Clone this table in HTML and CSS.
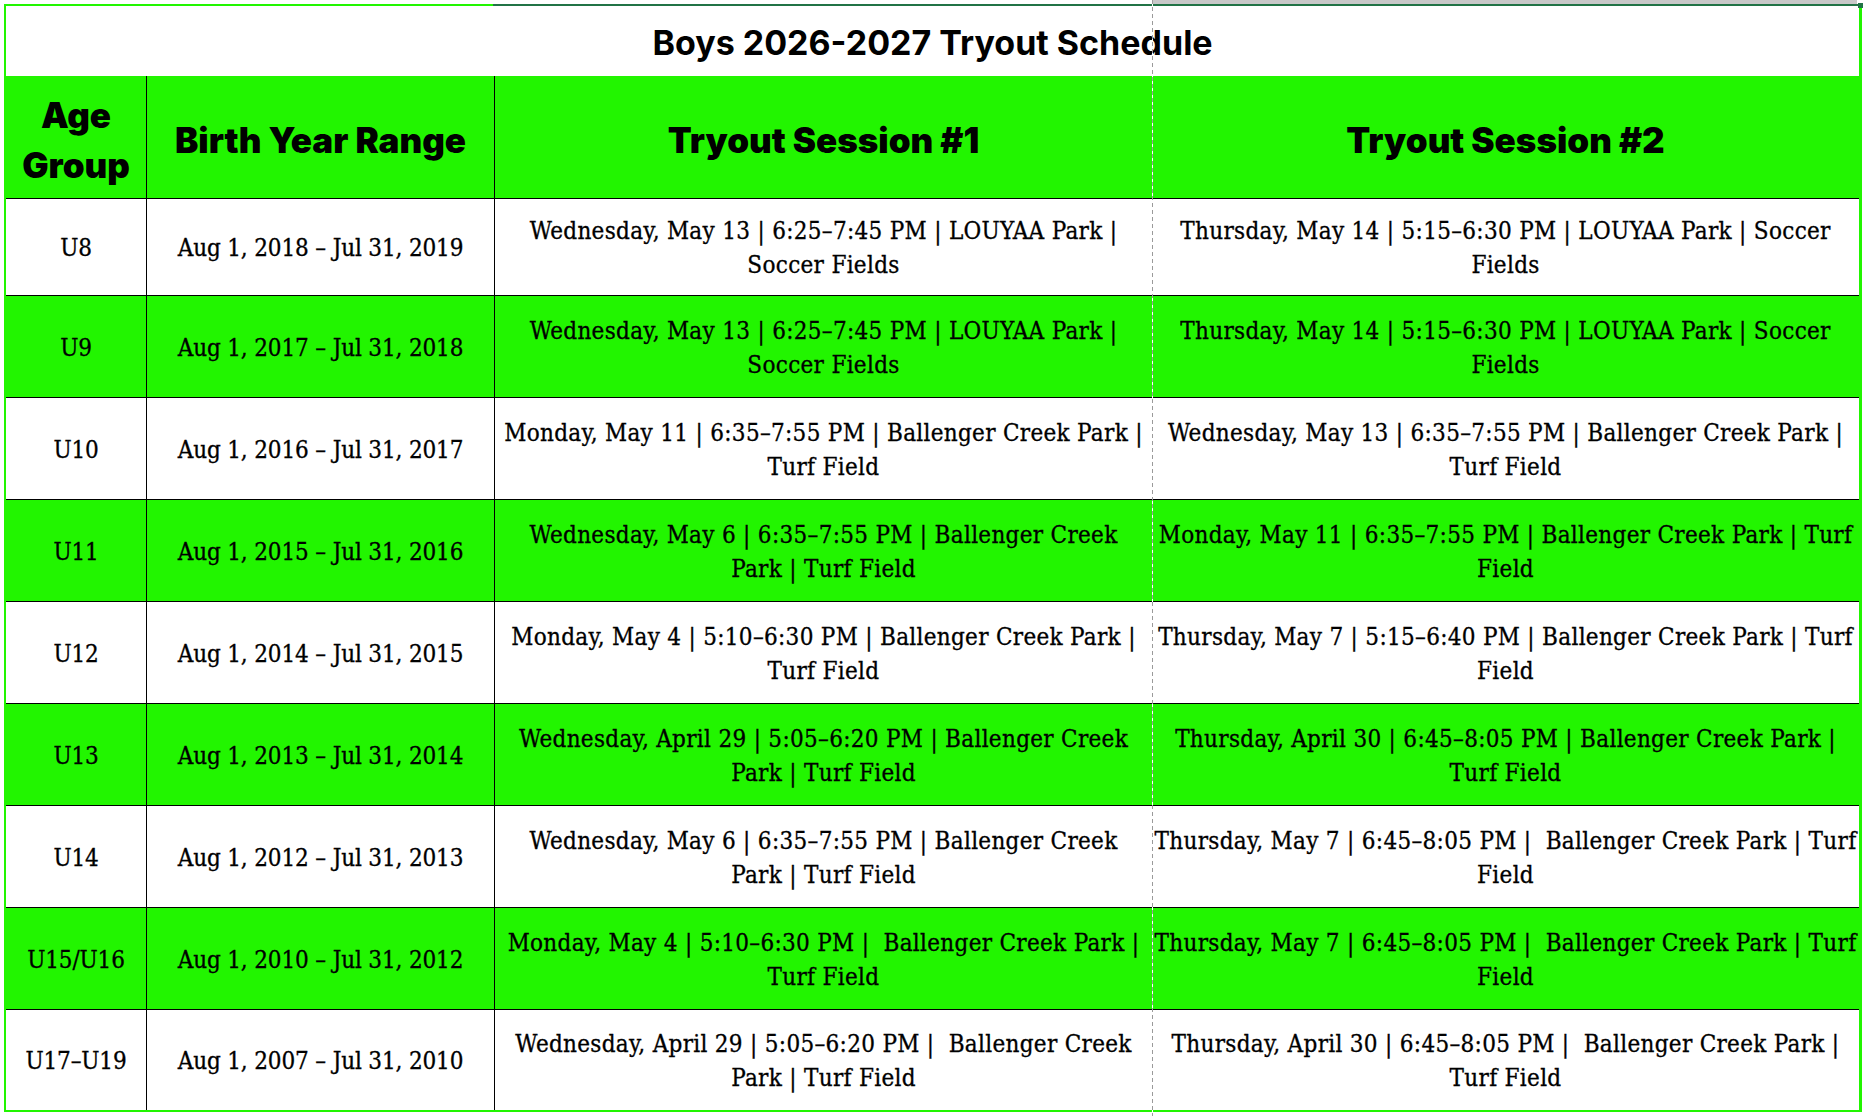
FILE: index.html
```html
<!DOCTYPE html>
<html lang="en">
<head>
<meta charset="utf-8">
<title>Boys 2026-2027 Tryout Schedule</title>
<link rel="stylesheet" href="styles.css">
</head>
<body>
<div class="sheet">
  <div class="top-strip">
    <div class="strip-space"></div>
    <div class="strip-gray"></div>
  </div>
  <div class="top-line">
    <div class="tl-light"></div>
    <div class="tl-dark"></div>
    <div class="tl-handle"></div>
  </div>
  <table class="schedule">
    <colgroup>
      <col class="c-age">
      <col class="c-birth">
      <col class="c-s1">
      <col class="c-s2">
    </colgroup>
    <tr class="title-row">
      <td colspan="4" class="title">Boys 2026-2027 Tryout Schedule</td>
    </tr>
    <tr class="head-row">
      <th>Age<br>Group</th>
      <th>Birth Year Range</th>
      <th class="no-right">Tryout Session #1</th>
      <th class="last">Tryout Session #2</th>
    </tr>
    <tr class="row first white">
      <td class="short">U8</td>
      <td class="short">Aug 1, 2018 – Jul 31, 2019</td>
      <td class="no-right">Wednesday, May 13 | 6:25–7:45 PM | LOUYAA Park |<br>Soccer Fields</td>
      <td class="last">Thursday, May 14 | 5:15–6:30 PM | LOUYAA Park | Soccer<br>Fields</td>
    </tr>
    <tr class="row green">
      <td class="short">U9</td>
      <td class="short">Aug 1, 2017 – Jul 31, 2018</td>
      <td class="no-right">Wednesday, May 13 | 6:25–7:45 PM | LOUYAA Park |<br>Soccer Fields</td>
      <td class="last">Thursday, May 14 | 5:15–6:30 PM | LOUYAA Park | Soccer<br>Fields</td>
    </tr>
    <tr class="row white">
      <td class="short">U10</td>
      <td class="short">Aug 1, 2016 – Jul 31, 2017</td>
      <td class="no-right">Monday, May 11 | 6:35–7:55 PM | Ballenger Creek Park |<br>Turf Field</td>
      <td class="last">Wednesday, May 13 | 6:35–7:55 PM | Ballenger Creek Park |<br>Turf Field</td>
    </tr>
    <tr class="row green">
      <td class="short">U11</td>
      <td class="short">Aug 1, 2015 – Jul 31, 2016</td>
      <td class="no-right">Wednesday, May 6 | 6:35–7:55 PM | Ballenger Creek<br>Park | Turf Field</td>
      <td class="last">Monday, May 11 | 6:35–7:55 PM | Ballenger Creek Park | Turf<br>Field</td>
    </tr>
    <tr class="row white">
      <td class="short">U12</td>
      <td class="short">Aug 1, 2014 – Jul 31, 2015</td>
      <td class="no-right">Monday, May 4 | 5:10–6:30 PM | Ballenger Creek Park |<br>Turf Field</td>
      <td class="last">Thursday, May 7 | 5:15–6:40 PM | Ballenger Creek Park | Turf<br>Field</td>
    </tr>
    <tr class="row green">
      <td class="short">U13</td>
      <td class="short">Aug 1, 2013 – Jul 31, 2014</td>
      <td class="no-right">Wednesday, April 29 | 5:05–6:20 PM | Ballenger Creek<br>Park | Turf Field</td>
      <td class="last">Thursday, April 30 | 6:45–8:05 PM | Ballenger Creek Park |<br>Turf Field</td>
    </tr>
    <tr class="row white">
      <td class="short">U14</td>
      <td class="short">Aug 1, 2012 – Jul 31, 2013</td>
      <td class="no-right">Wednesday, May 6 | 6:35–7:55 PM | Ballenger Creek<br>Park | Turf Field</td>
      <td class="last">Thursday, May 7 | 6:45–8:05 PM | &nbsp;Ballenger Creek Park | Turf<br>Field</td>
    </tr>
    <tr class="row green">
      <td class="short">U15/U16</td>
      <td class="short">Aug 1, 2010 – Jul 31, 2012</td>
      <td class="no-right">Monday, May 4 | 5:10–6:30 PM | &nbsp;Ballenger Creek Park |<br>Turf Field</td>
      <td class="last">Thursday, May 7 | 6:45–8:05 PM | &nbsp;Ballenger Creek Park | Turf<br>Field</td>
    </tr>
    <tr class="row bottom white">
      <td class="short">U17–U19</td>
      <td class="short">Aug 1, 2007 – Jul 31, 2010</td>
      <td class="no-right">Wednesday, April 29 | 5:05–6:20 PM | &nbsp;Ballenger Creek<br>Park | Turf Field</td>
      <td class="last">Thursday, April 30 | 6:45–8:05 PM | &nbsp;Ballenger Creek Park |<br>Turf Field</td>
    </tr>
  </table>
  <div class="page-break"></div>
</div>
</body>
</html>
```
FILE: styles.css
```css
html, body {
  margin: 0;
  padding: 0;
  background: #ffffff;
}

.sheet {
  position: relative;
  width: 1865px;
  height: 1116px;
  overflow: hidden;
  background: #ffffff;
}

.top-strip {
  display: flex;
  height: 4px;
}

.strip-space {
  width: 1152px;
}

.strip-gray {
  width: 705px;
  background: #c8c8c8;
}

.top-line {
  position: relative;
  display: flex;
  height: 2px;
  margin-left: 4px;
  width: 1856px;
}

.tl-light {
  width: 489px;
  background: #22f500;
}

.tl-dark {
  flex: 1;
  background: #217346;
}

.tl-handle {
  position: absolute;
  right: -3px;
  top: -1px;
  width: 5px;
  height: 5px;
  background: #217346;
}

.schedule {
  margin-left: 4px;
  width: 1858px;
  table-layout: fixed;
  border-collapse: separate;
  border-spacing: 0;
  border-left: 2px solid #22f500;
  border-right: 3px solid #22f500;
  border-bottom: 2px solid #22f500;
  font-family: "DejaVu Serif Condensed", "DejaVu Serif", serif;
  font-stretch: condensed;
  color: #000000;
}

.c-age { width: 141px; }
.c-birth { width: 348px; }
.c-s1 { width: 657px; }
.c-s2 { width: 707px; }

.title-row {
  height: 70px;
}

.title {
  padding: 3px 0 0 0;
  text-align: center;
  vertical-align: middle;
  font-family: Inter, "Liberation Sans", sans-serif;
  font-weight: 700;
  font-size: 34px;
  background: #ffffff;
}

.head-row {
  height: 123px;
  background: #22f500;
}

.head-row th {
  padding: 5px 0 0 0;
  text-align: center;
  vertical-align: middle;
  font-family: Inter, "Liberation Sans", sans-serif;
  font-weight: 900;
  font-size: 35px;
  line-height: 50px;
  border-right: 1px solid #000000;
  border-bottom: 1px solid #000000;
}

.row {
  height: 102px;
}

.row.first {
  height: 97px;
}

.row.bottom {
  height: 100px;
}

.row.green {
  background: #22f500;
}

.row.white {
  background: #ffffff;
}

.row td {
  padding: 2px 0 0 0;
  text-align: center;
  vertical-align: middle;
  font-size: 24px;
  line-height: 34px;
  letter-spacing: 0.3px;
  -webkit-text-stroke: 0.3px #000000;
  white-space: nowrap;
  border-right: 1px solid #000000;
  border-bottom: 1px solid #000000;
}

.row td.short {
  letter-spacing: -0.15px;
}

.row.bottom td {
  border-bottom: none;
}

.schedule .no-right,
.schedule .last {
  border-right: none;
}

.page-break {
  position: absolute;
  left: 1152px;
  top: 0;
  width: 1px;
  height: 1116px;
  background: repeating-linear-gradient(to bottom, #9a9a9a 0, #9a9a9a 4px, #ffffff 4px, #ffffff 7px);
}
```
